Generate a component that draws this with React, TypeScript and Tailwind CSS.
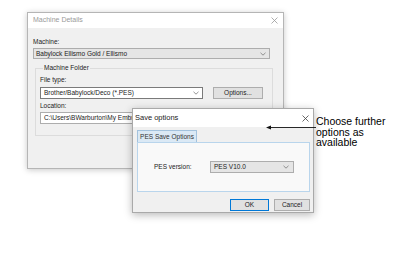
import React from "react";

const ui = "font-['Liberation_Sans',Arial,sans-serif]";

function Chevron({ className = "" }: { className?: string }) {
  return (
    <svg width="6" height="4" viewBox="0 0 6 4" className={className}>
      <path d="M0.5 0.8 L3 3.2 L5.5 0.8" fill="none" stroke="#777" strokeWidth="0.8" />
    </svg>
  );
}

function CloseX({ color = "#999" }: { color?: string }) {
  return (
    <svg width="7" height="7" viewBox="0 0 7 7">
      <path d="M0.5 0.5 L6.5 6.5 M6.5 0.5 L0.5 6.5" stroke={color} strokeWidth="0.8" />
    </svg>
  );
}

export default function App() {
  return (
    <div className={`relative w-[417px] h-[272px] bg-white overflow-hidden text-[#222] ${ui}`}>
      {/* Machine Details window */}
      <div className="absolute left-[27px] top-[12px] w-[257px] h-[157px] border border-[#b5b5b5] bg-[#f0f0f0] shadow-[0_1px_6px_rgba(0,0,0,0.22)] flex flex-col">
        <div className="h-[15px] bg-white flex items-center justify-between pl-[5px] pr-[5px]">
          <span className="text-[7px] text-[#9a9a9a]">Machine Details</span>
          <CloseX />
        </div>
        <div className="flex flex-col pl-[5px] pr-[13px] pt-[10px]">
          <span className="text-[6.5px] leading-[8px]">Machine:</span>
          <div className="mt-[2px] h-[11px] border border-[#adadad] bg-[#e5e5e5] flex items-center justify-between pl-[2px] pr-[3px]">
            <span className="text-[6.5px]">Babylock Ellismo Gold / Ellismo</span>
            <Chevron />
          </div>
          <fieldset className="mt-[5px] ml-[2px] mr-[-3px] border border-[#dcdcdc] h-[72px] pl-[4px] pr-[9px]">
            <legend className="ml-[3px] px-[1px] text-[6.5px] leading-[8px]">Machine Folder</legend>
            <span className="block mt-[4px] text-[6.5px] leading-[8px]">File type:</span>
            <div className="mt-[3px] flex items-center">
              <div className="w-[163px] h-[12px] border border-[#7a7a7a] bg-white flex items-center justify-between pl-[3px] pr-[3px]">
                <span className="text-[6.5px]">Brother/Babylock/Deco (*.PES)</span>
                <Chevron />
              </div>
              <div className="ml-[10px] w-[50px] h-[12px] border border-[#adadad] bg-[#e1e1e1] flex items-center justify-center">
                <span className="text-[6.5px]">Options...</span>
              </div>
            </div>
            <span className="block mt-[3px] text-[6.5px] leading-[8px]">Location:</span>
            <div className="mt-[2px] w-[223px] h-[12px] border border-[#adadad] bg-white flex items-center pl-[3px]">
              <span className="text-[6.5px] whitespace-nowrap">C:\Users\BWarburton\My Embr</span>
            </div>
          </fieldset>
        </div>
      </div>

      {/* Save options window */}
      <div className="absolute left-[132px] top-[108px] w-[182px] h-[105px] border border-[#a9a9a9] bg-[#f0f0f0] shadow-[0_2px_8px_rgba(0,0,0,0.28)] flex flex-col">
        <div className="h-[18px] bg-white flex items-center justify-between pl-[2px] pr-[4px]">
          <span className="text-[7.5px] text-[#222]">Save options</span>
          <CloseX color="#444" />
        </div>
        <div className="flex flex-col pl-[4px] pr-[3px] pt-[3px]">
          <div className="flex">
            <div className="w-[60px] h-[12px] border border-b-0 border-[#a3c2dd] bg-[#dbe9f5] flex items-center justify-center">
              <span className="text-[6.5px] text-[#333]">PES Save Options</span>
            </div>
          </div>
          <div className="h-[50px] border border-[#b9d5ec] bg-[#f9f9f9] flex items-center pl-[16px]">
            <span className="w-[56px] text-[6.5px]">PES version:</span>
            <div className="w-[84px] h-[12px] border border-[#adadad] bg-[#e5e5e5] flex items-center justify-between pl-[3px] pr-[4px]">
              <span className="text-[6.5px]">PES V10.0</span>
              <Chevron />
            </div>
          </div>
          <div className="mt-[7px] flex justify-end gap-[5px]">
            <div className="w-[39px] h-[12px] border border-[#0078d7] bg-[#e1e1e1] flex items-center justify-center">
              <span className="text-[6.5px]">OK</span>
            </div>
            <div className="w-[36px] h-[12px] border border-[#adadad] bg-[#e1e1e1] flex items-center justify-center">
              <span className="text-[6.5px]">Cancel</span>
            </div>
          </div>
        </div>
      </div>

      {/* callout arrow */}
      <svg className="absolute left-[265px] top-[124px]" width="52" height="7" viewBox="0 0 52 7">
        <path d="M5 3.5 L51 3.5" stroke="#111" strokeWidth="0.9" />
        <path d="M1 3.5 L6 1.5 L6 5.5 Z" fill="#111" />
      </svg>

      <div className="absolute left-[316px] top-[116px] text-[10.5px] leading-[10.5px] text-black">
        Choose further
        <br />
        options as
        <br />
        available
      </div>
    </div>
  );
}
